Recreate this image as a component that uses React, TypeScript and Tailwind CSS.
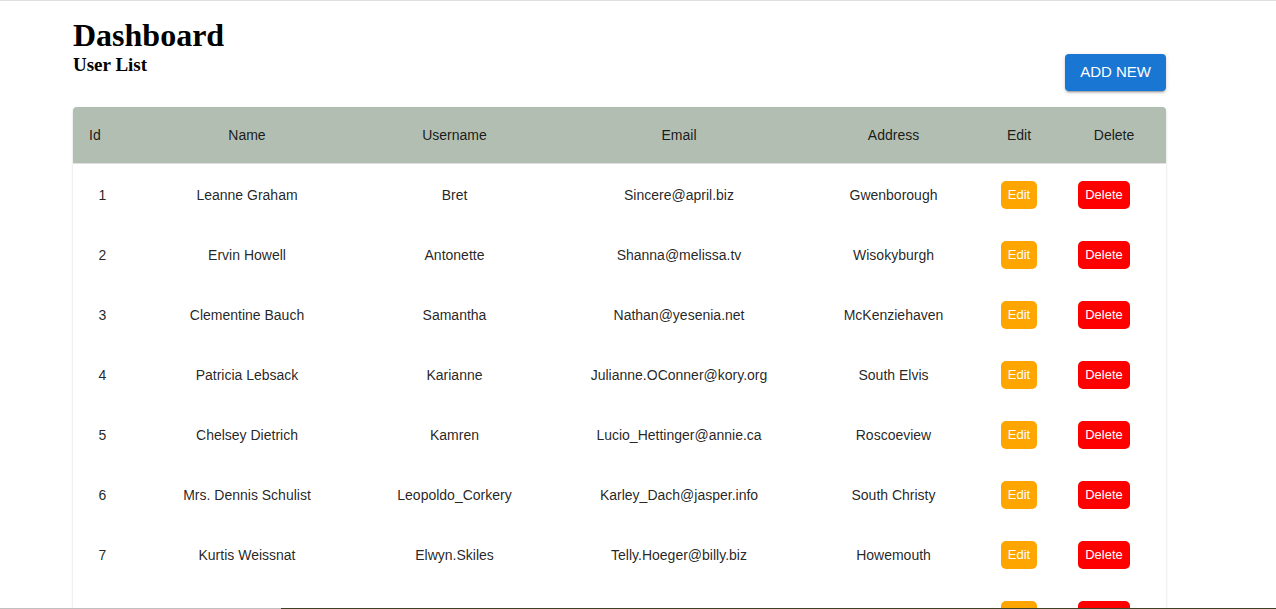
type User = {
  id: number;
  name: string;
  username: string;
  email: string;
  city: string;
};

const users: User[] = [
  { id: 1, name: "Leanne Graham", username: "Bret", email: "Sincere@april.biz", city: "Gwenborough" },
  { id: 2, name: "Ervin Howell", username: "Antonette", email: "Shanna@melissa.tv", city: "Wisokyburgh" },
  { id: 3, name: "Clementine Bauch", username: "Samantha", email: "Nathan@yesenia.net", city: "McKenziehaven" },
  { id: 4, name: "Patricia Lebsack", username: "Karianne", email: "Julianne.OConner@kory.org", city: "South Elvis" },
  { id: 5, name: "Chelsey Dietrich", username: "Kamren", email: "Lucio_Hettinger@annie.ca", city: "Roscoeview" },
  { id: 6, name: "Mrs. Dennis Schulist", username: "Leopoldo_Corkery", email: "Karley_Dach@jasper.info", city: "South Christy" },
  { id: 7, name: "Kurtis Weissnat", username: "Elwyn.Skiles", email: "Telly.Hoeger@billy.biz", city: "Howemouth" },
  { id: 8, name: "Nicholas Runolfsdottir V", username: "Maxime_Nienow", email: "Sherwood@rosamond.me", city: "Aliyaview" },
];

function UserRow({ user }: { user: User }) {
  return (
    <tr className="h-[60px]">
      <td className="pt-1 text-center">{user.id}</td>
      <td className="pt-1 text-center">{user.name}</td>
      <td className="pt-1 text-center">{user.username}</td>
      <td className="pt-1 text-center">{user.email}</td>
      <td className="pt-1 text-center">{user.city}</td>
      <td className="pt-1 text-center">
        <button
          type="button"
          aria-label={`Edit ${user.name}`}
          className="inline-flex h-7 w-9 items-center justify-center rounded-[5px] bg-[#ffa500] align-middle text-[13px] text-white"
        >
          Edit
        </button>
      </td>
      <td className="px-4 pt-1 text-left">
        <button
          type="button"
          aria-label={`Delete ${user.name}`}
          className="inline-flex h-7 w-[52px] items-center justify-center rounded-[5px] bg-[#ff0000] align-middle text-[13px] text-white"
        >
          Delete
        </button>
      </td>
    </tr>
  );
}

export default function App() {
  return (
    <div className="flex h-screen flex-col border-t border-[#dfdfdf] bg-white font-['Liberation_Sans',Arial,sans-serif]">
      <main className="min-h-0 flex-1 overflow-y-auto pl-[73px] pr-[110px] pt-4 [scrollbar-width:none]">
        <header className="flex items-end justify-between">
          <div className="self-start font-['Liberation_Serif','Times_New_Roman',serif] font-bold text-black">
            <h1 className="text-[32px] leading-9">Dashboard</h1>
            <h2 className="text-[19px] leading-6">User List</h2>
          </div>
          <button
            type="button"
            className="mt-[37px] h-[37px] rounded bg-[#1976d2] px-[15px] text-[15px] text-white shadow-[0_3px_1px_-2px_rgba(0,0,0,0.2),0_2px_2px_0_rgba(0,0,0,0.14),0_1px_5px_0_rgba(0,0,0,0.12)]"
          >
            ADD NEW
          </button>
        </header>

        <div className="mt-4 overflow-hidden rounded shadow-[0_2px_1px_-1px_rgba(0,0,0,0.2),0_1px_1px_0_rgba(0,0,0,0.14),0_1px_3px_0_rgba(0,0,0,0.12)]">
          <table className="w-full table-fixed border-collapse text-sm text-black/87">
            <colgroup>
              <col className="w-[59px]" />
              <col className="w-[230px]" />
              <col className="w-[185px]" />
              <col className="w-[264px]" />
              <col className="w-[165px]" />
              <col className="w-[86px]" />
              <col className="w-[104px]" />
            </colgroup>
            <thead className="bg-[#b2beb2]">
              <tr className="h-14 border-b border-[#e0e0e0]">
                <th scope="col" className="px-4 text-left font-normal">Id</th>
                <th scope="col" className="font-normal">Name</th>
                <th scope="col" className="font-normal">Username</th>
                <th scope="col" className="font-normal">Email</th>
                <th scope="col" className="font-normal">Address</th>
                <th scope="col" className="font-normal">Edit</th>
                <th scope="col" className="font-normal">Delete</th>
              </tr>
            </thead>
            <tbody>
              {users.map((user) => (
                <UserRow key={user.id} user={user} />
              ))}
            </tbody>
          </table>
        </div>
      </main>
      <footer className="flex h-px shrink-0 bg-[#3d4125]">
        <div className="w-[22%] bg-[#c0c0c0]" />
      </footer>
    </div>
  );
}
